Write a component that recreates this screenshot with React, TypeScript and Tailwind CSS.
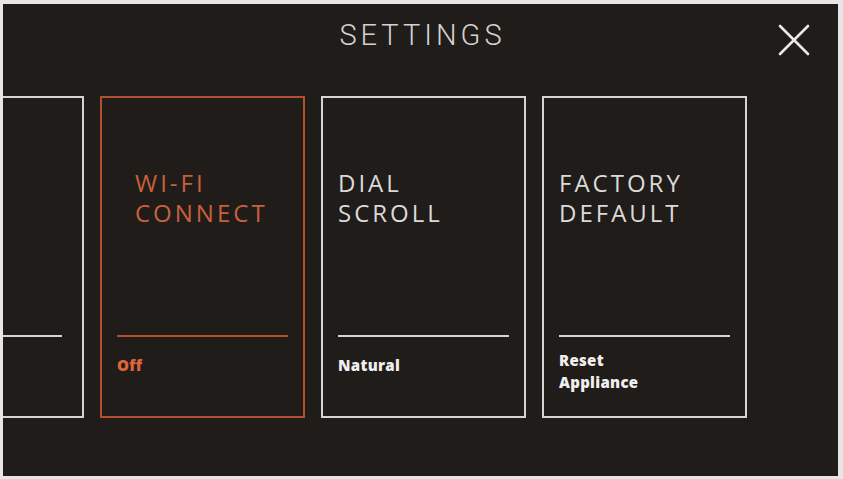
import React from "react"

type Card = {
  title: string[]
  sub: string[]
  active?: boolean
  subPad: string
  titlePad: string
  pad: string
}

const cards: Card[] = [
  { title: [""], sub: [""], subPad: "pt-[17px]", titlePad: "pl-[18px]", pad: "pl-[15px] pr-[20px]" },
  { title: ["WI-FI", "CONNECT"], sub: ["Off"], active: true, subPad: "pt-[17px]", titlePad: "pl-[18px]", pad: "px-[15px]" },
  { title: ["DIAL", "SCROLL"], sub: ["Natural"], subPad: "pt-[17px]", titlePad: "pl-0", pad: "px-[15px]" },
  { title: ["FACTORY", "DEFAULT"], sub: ["Reset", "Appliance"], subPad: "pt-[12px]", titlePad: "pl-0", pad: "px-[15px]" },
]

function SettingCard({ card }: { card: Card }) {
  const edge = card.active ? "border-[#b5502f]" : "border-[#d6d4d2]"
  const text = card.active ? "text-[#c9603c]" : "text-[#dcdad8]"
  const subText = card.active ? "text-[#e0643a]" : "text-[#f0efee]"
  return (
    <div className={`w-[205px] h-[322px] shrink-0 border-2 ${edge} flex flex-col ${card.pad}`}>
      <div className={`h-[237px] pt-[70px] ${card.titlePad}`}>
        {card.title.map((t, i) => (
          <div key={i} className={`text-[24px] leading-[30px] tracking-[3px] ${text}`}>
            {t}
          </div>
        ))}
      </div>
      <div className={`h-[2px] ${card.active ? "bg-[#b5502f]" : "bg-[#d6d4d2]"}`} />
      <div className={card.subPad}>
        {card.sub.map((s, i) => (
          <div key={i} className={`text-[15px] leading-[22px] font-extrabold tracking-[0.3px] ${subText}`}>
            {s}
          </div>
        ))}
      </div>
    </div>
  )
}

export default function App() {
  return (
    <div
      className="w-[843px] h-[479px] overflow-hidden bg-[#201c1a] border-t-4 border-l-[3px] border-r-[5px] border-b-[3px] border-[#e6e6e6] flex flex-col"
      style={{ fontFamily: '"Open Sans", "Liberation Sans", sans-serif' }}
    >
      <header className="relative h-[92px] shrink-0 flex justify-center pt-[12px]">
        <h1
          className="text-[29px] leading-[38px] tracking-[4px] text-[#d4d2d0] font-light pl-[4px]"
          style={{ fontFamily: 'Roboto, "Liberation Sans", sans-serif' }}
        >
          SETTINGS
        </h1>
        <button className="absolute right-[28px] top-[20px] w-[32px] h-[32px]" aria-label="Close">
          <svg viewBox="0 0 32 32" className="w-full h-full">
            <path d="M2 2 L30 30 M30 2 L2 30" stroke="#e8e8e8" strokeWidth="2.6" strokeLinecap="round" />
          </svg>
        </button>
      </header>
      <div className="flex gap-4 ml-[-124px]">
        {cards.map((c, i) => (
          <SettingCard key={i} card={c} />
        ))}
      </div>
    </div>
  )
}
